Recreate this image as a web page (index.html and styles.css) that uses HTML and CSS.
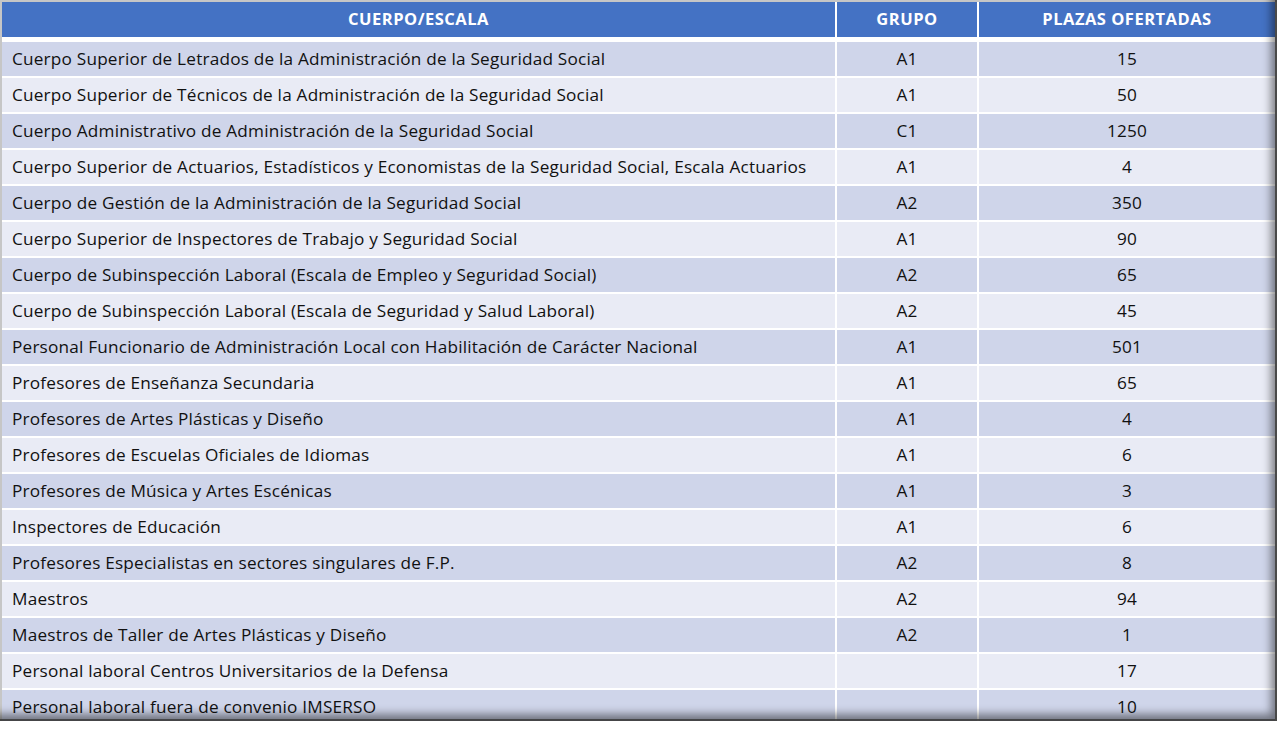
FILE: index.html
```html
<!DOCTYPE html>
<html lang="es">
<head>
<meta charset="utf-8">
<title>Plazas ofertadas</title>
<link rel="stylesheet" href="styles.css">
</head>
<body>
<div class="frame">
  <div class="head">
    <div class="hcell">CUERPO/ESCALA</div>
    <div class="hcell">GRUPO</div>
    <div class="hcell">PLAZAS OFERTADAS</div>
  </div>
  <div class="rows">
    <div class="row odd"><div class="c name">Cuerpo Superior de Letrados de la Administración de la Seguridad Social</div><div class="c">A1</div><div class="c">15</div></div>
    <div class="row even"><div class="c name">Cuerpo Superior de Técnicos de la Administración de la Seguridad Social</div><div class="c">A1</div><div class="c">50</div></div>
    <div class="row odd"><div class="c name">Cuerpo Administrativo de Administración de la Seguridad Social</div><div class="c">C1</div><div class="c">1250</div></div>
    <div class="row even"><div class="c name">Cuerpo Superior de Actuarios, Estadísticos y Economistas de la Seguridad Social, Escala Actuarios</div><div class="c">A1</div><div class="c">4</div></div>
    <div class="row odd"><div class="c name">Cuerpo de Gestión de la Administración de la Seguridad Social</div><div class="c">A2</div><div class="c">350</div></div>
    <div class="row even"><div class="c name">Cuerpo Superior de Inspectores de Trabajo y Seguridad Social</div><div class="c">A1</div><div class="c">90</div></div>
    <div class="row odd"><div class="c name">Cuerpo de Subinspección Laboral (Escala de Empleo y Seguridad Social)</div><div class="c">A2</div><div class="c">65</div></div>
    <div class="row even"><div class="c name">Cuerpo de Subinspección Laboral (Escala de Seguridad y Salud Laboral)</div><div class="c">A2</div><div class="c">45</div></div>
    <div class="row odd"><div class="c name">Personal Funcionario de Administración Local con Habilitación de Carácter Nacional</div><div class="c">A1</div><div class="c">501</div></div>
    <div class="row even"><div class="c name">Profesores de Enseñanza Secundaria</div><div class="c">A1</div><div class="c">65</div></div>
    <div class="row odd"><div class="c name">Profesores de Artes Plásticas y Diseño</div><div class="c">A1</div><div class="c">4</div></div>
    <div class="row even"><div class="c name">Profesores de Escuelas Oficiales de Idiomas</div><div class="c">A1</div><div class="c">6</div></div>
    <div class="row odd"><div class="c name">Profesores de Música y Artes Escénicas</div><div class="c">A1</div><div class="c">3</div></div>
    <div class="row even"><div class="c name">Inspectores de Educación</div><div class="c">A1</div><div class="c">6</div></div>
    <div class="row odd"><div class="c name">Profesores Especialistas en sectores singulares de F.P.</div><div class="c">A2</div><div class="c">8</div></div>
    <div class="row even"><div class="c name">Maestros</div><div class="c">A2</div><div class="c">94</div></div>
    <div class="row odd"><div class="c name">Maestros de Taller de Artes Plásticas y Diseño</div><div class="c">A2</div><div class="c">1</div></div>
    <div class="row even"><div class="c name">Personal laboral Centros Universitarios de la Defensa</div><div class="c"></div><div class="c">17</div></div>
    <div class="row odd"><div class="c name">Personal laboral fuera de convenio IMSERSO</div><div class="c"></div><div class="c">10</div></div>
  </div>
</div>
</body>
</html>
```

FILE: styles.css
```css
html, body {
  margin: 0;
  padding: 0;
  background: #ffffff;
}

body {
  font-family: "Open Sans", "Lato", sans-serif;
  color: #111111;
}

.frame {
  position: relative;
  width: 1275px;
  height: 719px;
  padding: 2px 0 0 2px;
  background: #ffffff;
  overflow: hidden;
  border-top: 1px solid #b8b8b8;
  border-left: 1px solid #c4c4c4;
  margin-top: -1px;
  margin-left: -1px;
}

.frame::after {
  content: "";
  position: absolute;
  inset: 0;
  pointer-events: none;
  box-shadow:
    inset -2px -2px 0 rgba(60, 60, 60, 0.85),
    inset -9px -10px 9px -3px rgba(0, 0, 0, 0.45),
    inset 2px 2px 0 #c6c6c6;
}

.head,
.row {
  display: grid;
  grid-template-columns: 833px 140px 296px;
  column-gap: 2px;
}

.head {
  height: 35px;
  margin-bottom: 5px;
}

.hcell {
  background: #4472c4;
  color: #ffffff;
  font-weight: 700;
  font-size: 16.5px;
  letter-spacing: 0.5px;
  display: flex;
  align-items: center;
  justify-content: center;
  padding-bottom: 2px;
}

.rows {
  display: flex;
  flex-direction: column;
  gap: 2px;
}

.row {
  height: 34px;
}

.c {
  display: flex;
  align-items: center;
  justify-content: center;
  font-size: 17.2px;
  letter-spacing: 0.2px;
  padding-bottom: 1px;
}

.c.name {
  justify-content: flex-start;
  padding-left: 10px;
}

.odd .c {
  background: #cfd5ea;
}

.even .c {
  background: #e9ebf5;
}
```
